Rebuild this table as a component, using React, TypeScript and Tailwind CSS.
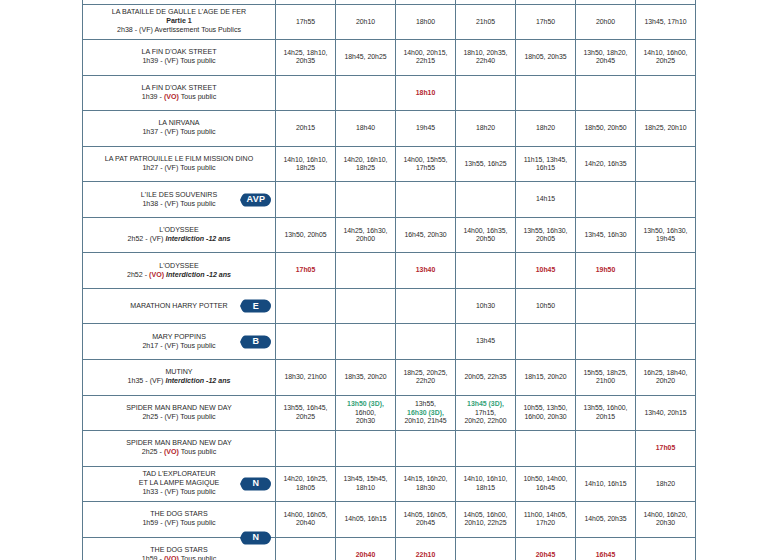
import React from "react";

type Seg = { t: string; c?: "red" | "green" };
type Cell = Seg[][]; // lines of segments

interface Film {
  title: string[];
  sub?: string; // e.g. "Partie 1"
  dur?: string;
  lang?: "VF" | "VO";
  rating?: string;
  ratingBold?: boolean;
  badge?: string;
  badgeEdge?: boolean;
  times: Cell[];
}

const p = (s: string): Cell => (s ? s.split("\n").map((l) => [{ t: l }]) : []);
const r = (s: string): Cell => [[{ t: s, c: "red" }]];
const E: Cell = [];

const films: Film[] = [
  {
    title: ["LA BATAILLE DE GAULLE L'AGE DE FER"],
    sub: "Partie 1",
    dur: "2h38",
    lang: "VF",
    rating: "Avertissement Tous Publics",
    times: ["17h55", "20h10", "18h00", "21h05", "17h50", "20h00", "13h45, 17h10"].map(p),
  },
  {
    title: ["LA FIN D'OAK STREET"],
    dur: "1h39",
    lang: "VF",
    rating: "Tous public",
    times: [
      "14h25, 18h10,\n20h35",
      "18h45, 20h25",
      "14h00, 20h15,\n22h15",
      "18h10, 20h35,\n22h40",
      "18h05, 20h35",
      "13h50, 18h20,\n20h45",
      "14h10, 16h00,\n20h25",
    ].map(p),
  },
  {
    title: ["LA FIN D'OAK STREET"],
    dur: "1h39",
    lang: "VO",
    rating: "Tous public",
    times: [E, E, r("18h10"), E, E, E, E],
  },
  {
    title: ["LA NIRVANA"],
    dur: "1h37",
    lang: "VF",
    rating: "Tous public",
    times: ["20h15", "18h40", "19h45", "18h20", "18h20", "18h50, 20h50", "18h25, 20h10"].map(p),
  },
  {
    title: ["LA PAT PATROUILLE LE FILM MISSION DINO"],
    dur: "1h27",
    lang: "VF",
    rating: "Tous public",
    times: [
      "14h10, 16h10,\n18h25",
      "14h20, 16h10,\n18h25",
      "14h00, 15h55,\n17h55",
      "13h55, 16h25",
      "11h15, 13h45,\n16h15",
      "14h20, 16h35",
      "",
    ].map(p),
  },
  {
    title: ["L'ILE DES SOUVENIRS"],
    dur: "1h38",
    lang: "VF",
    rating: "Tous public",
    badge: "AVP",
    times: ["", "", "", "", "14h15", "", ""].map(p),
  },
  {
    title: ["L'ODYSSEE"],
    dur: "2h52",
    lang: "VF",
    rating: "Interdiction -12 ans",
    ratingBold: true,
    times: [
      "13h50, 20h05",
      "14h25, 16h30,\n20h00",
      "16h45, 20h30",
      "14h00, 16h35,\n20h50",
      "13h55, 16h30,\n20h05",
      "13h45, 16h30",
      "13h50, 16h30,\n19h45",
    ].map(p),
  },
  {
    title: ["L'ODYSSEE"],
    dur: "2h52",
    lang: "VO",
    rating: "Interdiction -12 ans",
    ratingBold: true,
    times: [r("17h05"), E, r("13h40"), E, r("10h45"), r("19h50"), E],
  },
  {
    title: ["MARATHON HARRY POTTER"],
    badge: "E",
    times: ["", "", "", "10h30", "10h50", "", ""].map(p),
  },
  {
    title: ["MARY POPPINS"],
    dur: "2h17",
    lang: "VF",
    rating: "Tous public",
    badge: "B",
    times: ["", "", "", "13h45", "", "", ""].map(p),
  },
  {
    title: ["MUTINY"],
    dur: "1h35",
    lang: "VF",
    rating: "Interdiction -12 ans",
    ratingBold: true,
    times: [
      "18h30, 21h00",
      "18h35, 20h20",
      "18h25, 20h25,\n22h20",
      "20h05, 22h35",
      "18h15, 20h20",
      "15h55, 18h25,\n21h00",
      "16h25, 18h40,\n20h20",
    ].map(p),
  },
  {
    title: ["SPIDER MAN BRAND NEW DAY"],
    dur: "2h25",
    lang: "VF",
    rating: "Tous public",
    times: [
      p("13h55, 16h45,\n20h25"),
      [[{ t: "13h50 (3D),", c: "green" }], [{ t: "16h00," }], [{ t: "20h30" }]],
      [[{ t: "13h55," }], [{ t: "16h30 (3D),", c: "green" }], [{ t: "20h10, 21h45" }]],
      [[{ t: "13h45 (3D),", c: "green" }], [{ t: "17h15," }], [{ t: "20h20, 22h00" }]],
      p("10h55, 13h50,\n16h00, 20h30"),
      p("13h55, 16h00,\n20h15"),
      p("13h40, 20h15"),
    ],
  },
  {
    title: ["SPIDER MAN BRAND NEW DAY"],
    dur: "2h25",
    lang: "VO",
    rating: "Tous public",
    times: [E, E, E, E, E, E, r("17h05")],
  },
  {
    title: ["TAD L'EXPLORATEUR", "ET LA LAMPE MAGIQUE"],
    dur: "1h33",
    lang: "VF",
    rating: "Tous public",
    badge: "N",
    times: [
      "14h20, 16h25,\n18h05",
      "13h45, 15h45,\n18h10",
      "14h15, 16h20,\n18h30",
      "14h10, 16h10,\n18h15",
      "10h50, 14h00,\n16h45",
      "14h10, 16h15",
      "18h20",
    ].map(p),
  },
  {
    title: ["THE DOG STARS"],
    dur: "1h59",
    lang: "VF",
    rating: "Tous public",
    badge: "N",
    badgeEdge: true,
    times: [
      "14h00, 16h05,\n20h40",
      "14h05, 16h15",
      "14h05, 16h05,\n20h45",
      "14h05, 16h00,\n20h10, 22h25",
      "11h00, 14h05,\n17h20",
      "14h05, 20h35",
      "14h00, 16h20,\n20h30",
    ].map(p),
  },
  {
    title: ["THE DOG STARS"],
    dur: "1h59",
    lang: "VO",
    rating: "Tous public",
    times: [E, r("20h40"), r("22h10"), E, r("20h45"), r("16h45"), E],
  },
];

const Badge = ({ label, edge }: { label: string; edge?: boolean }) => (
  <div
    className={
      edge
        ? "absolute right-[4px] bottom-[-8px] z-10 w-[31px] h-[14px] flex items-center justify-center"
        : "absolute right-[4px] top-1/2 -translate-y-1/2 w-[31px] h-[14px] flex items-center justify-center"
    }
  >
    <svg className="absolute inset-0" width="31" height="14" viewBox="0 0 31 14">
      <path
        d="M5 0.5 H24.5 A6.5 6.5 0 0 1 24.5 13.5 H5 C2.5 13.5 1 9 0 7 C1 5 2.5 0.5 5 0.5 Z"
        fill="#164a7e"
      />
    </svg>
    <span className="relative text-white font-bold text-[9px] leading-none tracking-[0.4px] pl-[1px]">
      {label}
    </span>
  </div>
);

const TimeCell = ({ cell }: { cell: Cell }) => (
  <td className="border border-[#5b7b8f] text-center align-middle px-[2px]">
    {cell.map((line, i) => (
      <div key={i}>
        {line.map((s, j) => (
          <span
            key={j}
            className={
              s.c === "red"
                ? "text-[#b3262e] font-bold"
                : s.c === "green"
                ? "text-[#33a277] font-bold"
                : ""
            }
          >
            {s.t}
          </span>
        ))}
      </div>
    ))}
  </td>
);

export default function App() {
  return (
    <div
      className="w-[780px] h-[560px] overflow-hidden bg-white text-[#2a2a2a]"
      style={{ fontFamily: '"Liberation Sans", Arial, sans-serif' }}
    >
      <table className="ml-[82px] table-fixed border-collapse w-[614px] text-[6.9px] leading-[8.4px]">
        <colgroup>
          <col className="w-[193px]" />
          {Array.from({ length: 7 }).map((_, i) => (
            <col key={i} className="w-[60px]" />
          ))}
        </colgroup>
        <tbody>
          <tr className="h-[4px]">
            {Array.from({ length: 8 }).map((_, i) => (
              <td key={i} className="border border-[#5b7b8f] border-t-0" />
            ))}
          </tr>
          {films.map((f, i) => (
            <tr key={i} className="h-[35.55px]">
              <td className="relative border border-[#5b7b8f] text-center align-middle text-[7.1px] leading-[9px]">
                {f.title.map((t, k) => (
                  <div key={k}>{t}</div>
                ))}
                {f.sub && <div className="font-bold">{f.sub}</div>}
                {f.dur && (
                  <div>
                    {f.dur} -{" "}
                    {f.lang === "VO" ? (
                      <span className="text-[#b3262e] font-bold">(VO)</span>
                    ) : (
                      "(VF)"
                    )}{" "}
                    {f.ratingBold ? (
                      <span className="font-bold italic">{f.rating}</span>
                    ) : (
                      f.rating
                    )}
                  </div>
                )}
                {f.badge && <Badge label={f.badge} edge={f.badgeEdge} />}
              </td>
              {f.times.map((c, j) => (
                <TimeCell key={j} cell={c} />
              ))}
            </tr>
          ))}
        </tbody>
      </table>
    </div>
  );
}
